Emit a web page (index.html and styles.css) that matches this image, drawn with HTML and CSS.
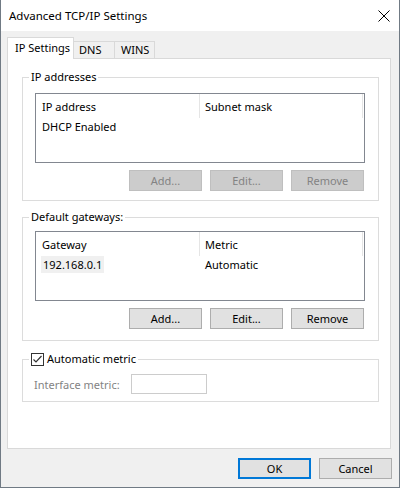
FILE: index.html
```html
<!DOCTYPE html>
<html lang="en">
<head>
    <meta charset="UTF-8">
    <meta name="viewport" content="width=device-width, initial-scale=1.0">
    <link rel="stylesheet" href="styles.css">
    <title>Advanced TCP/IP Settings</title>
</head>
<body>
    <div class="window">
        <div class="titlebar">
            <span class="title">Advanced TCP/IP Settings</span>
            <svg class="close" width="12" height="12" viewBox="0 0 12 12">
                <path d="M0.5 0.5 L11.5 11.5 M11.5 0.5 L0.5 11.5" stroke="#000" stroke-width="1" fill="none"/>
            </svg>
        </div>

        <div class="tabs">
            <div class="tab active">IP Settings</div>
            <div class="tab tab-dns">DNS</div>
            <div class="tab tab-wins">WINS</div>
        </div>

        <div class="panel">
            <fieldset class="group group-ip">
                <legend>IP addresses</legend>
                <div class="listbox">
                    <div class="list-head">
                        <div class="col">IP address</div>
                        <div class="col">Subnet mask</div>
                    </div>
                    <div class="list-row">
                        <div class="col">DHCP Enabled</div>
                        <div class="col"></div>
                    </div>
                </div>
                <div class="btn-row">
                    <button class="btn" disabled>Add...</button>
                    <button class="btn" disabled>Edit...</button>
                    <button class="btn" disabled>Remove</button>
                </div>
            </fieldset>

            <fieldset class="group group-gw">
                <legend>Default gateways:</legend>
                <div class="listbox">
                    <div class="list-head">
                        <div class="col">Gateway</div>
                        <div class="col">Metric</div>
                    </div>
                    <div class="list-row">
                        <div class="col col-sel"><span class="sel">192.168.0.1</span></div>
                        <div class="col">Automatic</div>
                    </div>
                </div>
                <div class="btn-row">
                    <button class="btn">Add...</button>
                    <button class="btn">Edit...</button>
                    <button class="btn">Remove</button>
                </div>
            </fieldset>

            <fieldset class="group group-metric">
                <legend>
                    <svg class="check" width="13" height="13" viewBox="0 0 13 13">
                        <rect x="0.5" y="0.5" width="12" height="12" fill="#fff" stroke="#333"/>
                        <path d="M2.5 6.5 L5 9 L10.5 3" stroke="#333" stroke-width="1.2" fill="none"/>
                    </svg>
                    <span>Automatic metric</span>
                </legend>
                <div class="metric-row">
                    <span class="metric-label">Interface metric:</span>
                    <input class="metric-input" type="text" disabled>
                </div>
            </fieldset>
        </div>

        <div class="dialog-buttons">
            <button class="btn default">OK</button>
            <button class="btn">Cancel</button>
        </div>
    </div>
</body>
</html>
```

FILE: styles.css
```css
body {
    margin: 0;
    font-family: 'Noto Sans', sans-serif;
    font-size: 11px;
    color: #000;
}

.window {
    width: 400px;
    height: 488px;
    box-sizing: border-box;
    border: 1px solid #707a84;
    border-top: none;
    background-color: #f0f0f0;
    display: flex;
    flex-direction: column;
}

.titlebar {
    height: 31px;
    flex-shrink: 0;
    background-color: #fff;
    display: flex;
    align-items: center;
    justify-content: space-between;
    padding: 0 9px 0 8px;
}

.title {
    font-size: 11.5px;
}

/* tab strip */
.tabs {
    display: flex;
    align-items: flex-end;
    height: 21px;
    margin: 6px 0 0 6px;
    position: relative;
}

.tab {
    box-sizing: border-box;
    height: 17px;
    line-height: 16px;
    border: 1px solid #d9d9d9;
    border-bottom: none;
    border-left: none;
    background-color: #f0f0f0;
}

.tab.active {
    width: 67px;
    height: 22px;
    margin-bottom: -1px;
    padding: 2px 0 0 7px;
    border-left: 1px solid #d9d9d9;
    background-color: #fff;
}

.tab-dns {
    width: 41px;
    padding-left: 5px;
}

.tab-wins {
    width: 40px;
    padding-left: 6px;
}

.panel {
    height: 391px;
    box-sizing: border-box;
    margin: 0 8px 0 6px;
    padding: 10px 11px 0 14px;
    border: 1px solid #d9d9d9;
    background-color: #fff;
}

/* group boxes */
.group {
    margin: 0;
    border: 1px solid #dcdcdc;
    min-width: 0;
}

.group legend {
    padding: 0 2px;
    margin-left: -6px;
    line-height: 16px;
}

.group-ip {
    padding: 8px 13px 9px 12px;
}

.group-gw {
    margin-top: 8px;
    padding: 6px 13px 11px 12px;
}

.group-metric {
    margin-top: 10px;
    padding: 7px 11px 7px 11px;
}

.group-metric legend {
    margin-left: -5px;
    display: flex;
    align-items: center;
    gap: 3px;
}

.check {
    display: block;
}

.listbox {
    height: 70px;
    box-sizing: border-box;
    border: 1px solid #828790;
    background-color: #fff;
}

.list-head,
.list-row {
    display: grid;
    grid-template-columns: 164px 163px;
}

.list-head .col {
    height: 24px;
    line-height: 24px;
    padding: 1px 0 0 6px;
    box-sizing: border-box;
    border-right: 1px solid #e5e5e5;
}

.list-head .col + .col {
    padding-left: 5px;
}

.list-row .col {
    height: 18px;
    line-height: 18px;
    padding-left: 6px;
}

.list-row .col + .col {
    padding-left: 5px;
}

.list-row .col-sel {
    padding-left: 5px;
}

.sel {
    display: inline-block;
    padding: 0 2px;
    line-height: 17px;
    background-color: #f0f0f0;
}

/* buttons */
.btn-row {
    display: flex;
    justify-content: flex-end;
    gap: 8px;
    margin-top: 7px;
    padding-right: 1px;
}

.btn {
    box-sizing: border-box;
    width: 73px;
    height: 21px;
    padding: 0;
    font-family: inherit;
    font-size: 11px;
    color: #000;
    background-color: #e1e1e1;
    border: 1px solid #adadad;
}

.btn:disabled {
    color: #838383;
    background-color: #cccccc;
    border-color: #bfbfbf;
}

.btn.default {
    border: 2px solid #0078d7;
}

.metric-row {
    display: flex;
    align-items: center;
}

.metric-label {
    width: 97px;
    color: #838383;
}

.metric-input {
    box-sizing: border-box;
    width: 76px;
    height: 20px;
    margin: 0;
    border: 1px solid #cccccc;
    background-color: #fff;
}

.dialog-buttons {
    display: flex;
    justify-content: flex-end;
    gap: 8px;
    margin: 9px 7px 0 0;
}
```
